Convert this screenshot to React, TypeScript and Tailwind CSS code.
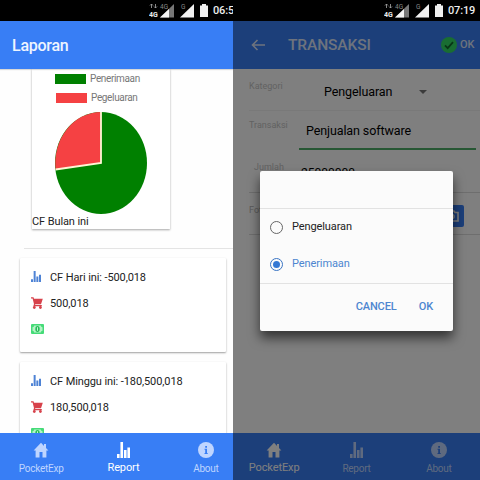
import { ReactNode } from "react";

const tabs = ["PocketExp", "Report", "About"];

function BarsIcon({ className }: { className: string }) {
  return (
    <svg viewBox="0 0 14 16" preserveAspectRatio="none" className={className} fill="currentColor">
      <path d="M0 12h2.8v4H0zM3.7 0h2.8v16H3.7zM7.5 8h2.8v8H7.5zM11.2 5.5H14V16h-2.8z" />
    </svg>
  );
}

function HomeIcon() {
  return (
    <svg viewBox="0 0 16 16" className="h-4 w-4" fill="currentColor">
      <path d="M8 .8.6 8.5h2v7H6.5V10h3v5.5h3.9v-7h2L13 6V2h-2v2z" />
    </svg>
  );
}

function InfoIcon({ hole }: { hole: string }) {
  return (
    <svg viewBox="0 0 16 16" className="h-4 w-4">
      <circle cx="8" cy="8" r="8" fill="currentColor" />
      <path d="M7.2 4h1.8v1.7H7.2zM6.5 6.8H9V11h.7v.9H6.5V11h.7V7.7h-.7z" fill={hole} />
    </svg>
  );
}

function CartIcon() {
  return (
    <svg viewBox="0 0 12 12" className="h-3 w-3" fill="#d7424b">
      <path d="M0 .3h2.5L3 1.8h8.8L10 7.2H4.4l-.4.9h6.8v1.2H2.3l.7-2.4L1.6 1.6H0z" />
      <circle cx="3.3" cy="10.5" r="1.4" />
      <circle cx="9.4" cy="10.5" r="1.4" />
    </svg>
  );
}

function CashIcon() {
  return (
    <svg viewBox="0 0 13 10" className="h-2.5 w-[13px]">
      <rect width="13" height="10" rx="1" fill="#45db78" />
      <path d="M3.2 1.5h6.6a1.8 1.8 0 0 0 1.7 1.7v3.6a1.8 1.8 0 0 0-1.7 1.7H3.2a1.8 1.8 0 0 0-1.7-1.7V3.2a1.8 1.8 0 0 0 1.7-1.7z" fill="#b4f3c6" />
      <ellipse cx="6.5" cy="5" rx="2.2" ry="3" fill="#27bd58" />
      <path d="M6.1 3.2h.9v3.6h-.9z" fill="#d8fae2" />
    </svg>
  );
}

function StatusBar({ time, className }: { time: string; className: string }) {
  return (
    <div className={`flex h-[21px] shrink-0 bg-black text-[#eee] ${className}`}>
      <svg viewBox="0 0 62 21" className="h-[21px] w-[62px] shrink-0">
        <path d="M2.5 4v4M1 5.5 2.5 4 4 5.5M6.5 4v4M5 6.5 6.5 8 8 6.5" stroke="#aaa" strokeWidth=".8" fill="none" />
        <text x="0" y="16.5" fontSize="7" fontWeight="700" fontFamily="Roboto" fill="#eee">4G</text>
        <path d="M25 4v13.5H11z" fill="#777" />
        <path d="M20 9v8.5h-9z" fill="#f4f4f4" />
        <text x="11" y="9" fontSize="6.5" fontFamily="Roboto" fill="#888">4G</text>
        <path d="M45 4v13.5H31z" fill="#f1f1f1" />
        <text x="32" y="9" fontSize="6.5" fontFamily="Roboto" fill="#888">G</text>
        <path d="M51 5.5h2V4h4v1.5h2V17h-8z" fill="#f1f1f1" />
      </svg>
      <span className="ml-[2px] text-[11px] leading-[21px] font-medium tracking-[-0.15px] whitespace-nowrap">{time}</span>
    </div>
  );
}

function TabBar({ active, hole }: { active: string; hole: string }) {
  return (
    <div className="grid h-[47px] w-[247px] shrink-0 grid-cols-3 bg-[#387ef5]">
      {tabs.map((tab) => (
        <div
          key={tab}
          className={`flex flex-col items-center pt-[9px] ${tab === active ? "text-white" : "text-[#bfd5ff]"}`}
        >
          {tab === "PocketExp" && <HomeIcon />}
          {tab === "Report" && <BarsIcon className="h-4 w-[13px]" />}
          {tab === "About" && <InfoIcon hole={hole} />}
          <span
            className={
              tab === active
                ? "mt-[2px] text-[11px] leading-4 tracking-[-0.1px]"
                : "mt-[3px] text-[10px] leading-4 tracking-[-0.25px]"
            }
          >
            {tab}
          </span>
        </div>
      ))}
    </div>
  );
}

function Legend({ color, label }: { color: string; label: string }) {
  return (
    <div className="flex h-[19px] items-center gap-1">
      <span className={`h-[10px] w-[31px] ${color}`} />
      <span className="text-[10px] leading-[19px] tracking-[-0.35px] text-[#777]">{label}</span>
    </div>
  );
}

function Row({ icon, children }: { icon: ReactNode; children?: ReactNode }) {
  return (
    <div className="flex h-[26px] items-center">
      <span className="flex w-[19px] justify-start">{icon}</span>
      <span className="text-[11px] leading-[26px] tracking-[-0.1px] whitespace-nowrap text-[#222]">{children}</span>
    </div>
  );
}

function CashflowCard({ title, amount, className }: { title: string; amount: string; className: string }) {
  return (
    <div
      className={`ml-5 h-[94px] w-[206px] shrink-0 rounded-[1px] bg-white pt-[7px] pl-[11px] shadow-[0_1px_2px_rgba(0,0,0,0.38)] ${className}`}
    >
      <Row icon={<BarsIcon className="mb-1 h-[11px] w-[10px] text-[#4e83d5]" />}>{title}</Row>
      <Row icon={<span className="mb-[3px]"><CartIcon /></span>}>{amount}</Row>
      <Row icon={<span className="mb-[3px]"><CashIcon /></span>} />
    </div>
  );
}

function ReportScreen() {
  return (
    <section className="flex h-[480px] w-[233px] shrink-0 flex-col overflow-hidden bg-[#fefefe]">
      <StatusBar time="06:5" className="pl-[149px]" />
      <header className="z-10 flex h-12 shrink-0 items-center bg-[#387ef5] pl-3 shadow-[0_1px_1px_rgba(0,0,0,0.15)]">
        <h1 className="mt-[2px] text-[16px] font-medium tracking-[-0.25px] text-[#eef5ff]">Laporan</h1>
      </header>
      <main className="flex min-h-0 flex-1 flex-col overflow-hidden">
        <div className="ml-8 flex h-40 w-[138px] shrink-0 flex-col bg-white shadow-[0_1px_2px_rgba(0,0,0,0.35)]">
          <div className="pl-[23px]">
            <Legend color="bg-[#008000]" label="Penerimaan" />
            <div className="pl-px">
              <Legend color="bg-[#f54143]" label="Pegeluaran" />
            </div>
          </div>
          <svg viewBox="0 0 92 102" className="mt-[5px] ml-[23px] h-[102px] w-[92px] shrink-0">
            <ellipse cx="46" cy="51" rx="46" ry="51" fill="#008000" />
            <path d="M46 51V0A46 51 0 0 0 .6 57.5z" fill="#f54143" />
            <path d="M46 0V51L.6 57.5" fill="none" stroke="#fff6d5" strokeWidth="1.8" />
          </svg>
          <p className="text-[11px] leading-[15px] tracking-[-0.1px] text-[#222]">CF Bulan ini</p>
        </div>
        <div className="mt-[19px] ml-6 h-px shrink-0 bg-[#e4e4e4]" />
        <CashflowCard title="CF Hari ini: -500,018" amount="500,018" className="mt-[9px]" />
        <CashflowCard title="CF Minggu ini: -180,500,018" amount="180,500,018" className="mt-[10px]" />
      </main>
      <TabBar active="Report" hole="#387ef5" />
    </section>
  );
}

function Radio({ checked, label }: { checked?: boolean; label: string }) {
  return (
    <div className={`flex h-[37px] items-center gap-[9px] ${checked ? "text-[#4d86d0]" : "text-[#222]"}`}>
      <span
        className={`flex h-[13px] w-[13px] items-center justify-center rounded-full border-[1.5px] ${
          checked ? "border-[#3974c4]" : "border-[#666]"
        }`}
      >
        {checked && <span className="h-[7px] w-[7px] rounded-full bg-[#3478d4]" />}
      </span>
      <span className="text-[11px] tracking-[-0.1px]">{label}</span>
    </div>
  );
}

function TransactionScreen() {
  return (
    <section className="relative flex h-[480px] w-[247px] shrink-0 flex-col overflow-hidden bg-white">
      <StatusBar time="07:19" className="pl-[151px]" />
      <header className="flex h-12 shrink-0 items-center bg-[#387ef5] pl-[18px] text-[#dce7fb]">
        <svg viewBox="0 0 14 12" className="h-3 w-[14px]" fill="none" stroke="currentColor" strokeWidth="1.6">
          <path d="M14 6H1.5M6.5 1l-5 5 5 5" />
        </svg>
        <h1 className="mt-[2px] ml-[23px] w-[153px] text-[15.5px] font-medium tracking-[-0.1px]">TRANSAKSI</h1>
        <svg viewBox="0 0 16 16" className="h-4 w-4">
          <circle cx="8" cy="8" r="8" fill="#32db64" />
          <path d="m4 8.3 2.7 2.8L12 5.2" fill="none" stroke="#116b2c" strokeWidth="1.8" />
        </svg>
        <span className="ml-[3px] text-[11px] font-medium">OK</span>
      </header>
      <main className="flex flex-1 flex-col pl-4">
        <div className="flex h-[42px] items-center border-b border-[#f3f3f3]">
          <span className="mb-[5px] w-[75px] text-[9px] text-[#c4c4c4]">Kategori</span>
          <span className="mt-[5px] w-[95px] text-[12.5px] tracking-[-0.1px] text-black">Pengeluaran</span>
          <span className="mt-1 h-0 w-0 border-x-[4px] border-t-[4px] border-x-transparent border-t-[#777]" />
        </div>
        <div className="flex h-[39px] items-center">
          <span className="mb-[10px] w-[50px] text-[9px] text-[#c4c4c4]">Transaksi</span>
          <div className="mt-[1px] flex h-[38px] w-[177px] items-center border-b-2 border-[#4fae68] pt-[2px] pl-[7px] text-[12.5px] tracking-[-0.1px] text-black">
            Penjualan software
          </div>
        </div>
        <div className="flex h-[43px] shrink-0 border-b border-[#ddd]">
          <span className="mt-[11px] w-[52px] pl-[5px] text-[9px] text-[#c4c4c4]">Jumlah</span>
          <span className="mt-[15px] text-[12px] leading-4 text-black">25000000</span>
        </div>
        <div className="flex h-[42px] items-center border-b border-[#ddd]">
          <span className="mb-[5px] w-[184px] text-[9px] text-[#b5b5b5]">Foto</span>
          <div className="mt-[5px] flex h-[22px] w-[31px] items-center justify-end rounded-[2px] bg-[#387ef5] pr-[5px]">
            <svg viewBox="0 0 14 12" className="h-3 w-[14px]" fill="none" stroke="#fff" strokeWidth="1.6">
              <path d="M1 2.5h3L5 1h4l1 1.5h3V11H1z" />
              <circle cx="7" cy="6.5" r="2" />
            </svg>
          </div>
        </div>
      </main>
      <TabBar active="PocketExp" hole="#387ef5" />

      <div className="absolute inset-x-0 top-[21px] bottom-0 bg-black/50" />
      <div className="absolute top-[171px] left-[27px] flex h-[160px] w-[193px] flex-col rounded-[2px] bg-[#fbfbfb] shadow-[0_7px_12px_rgba(0,0,0,0.6)]">
        <div className="h-[38px] shrink-0 border-b border-[#e2e2e2]" />
        <div className="h-[75px] shrink-0 border-b border-[#e2e2e2] pl-[10px]">
          <Radio label="Pengeluaran" />
          <Radio label="Penerimaan" checked />
        </div>
        <div className="flex h-[46px] items-center justify-end gap-[22px] pt-px pr-5 text-[11px] font-medium tracking-[-0.1px] text-[#4d86d0]">
          <button>CANCEL</button>
          <button>OK</button>
        </div>
      </div>
    </section>
  );
}

export default function App() {
  return (
    <div className="flex h-[480px] w-[480px] overflow-hidden font-[Roboto,sans-serif]">
      <ReportScreen />
      <TransactionScreen />
    </div>
  );
}
